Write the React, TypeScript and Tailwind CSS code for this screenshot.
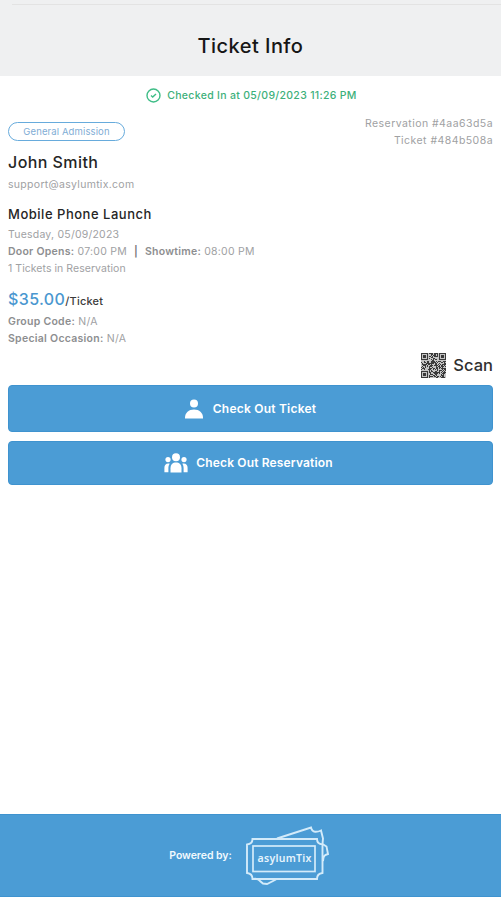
import React from "react";

const QR_SIZE = 25;

function inFinder(x: number, y: number) {
  return (x < 8 && y < 8) || (x > 16 && y < 8) || (x < 8 && y > 16);
}

function finderDark(x: number, y: number) {
  const fx = x > 16 ? x - 18 : x;
  const fy = y > 16 ? y - 18 : y;
  if (fx < 0 || fy < 0 || fx > 6 || fy > 6) return false;
  const d = Math.max(Math.abs(fx - 3), Math.abs(fy - 3));
  return d !== 2;
}

function QrCode() {
  const cells: React.ReactElement[] = [];
  let seed = 4843;
  for (let y = 0; y < QR_SIZE; y++) {
    for (let x = 0; x < QR_SIZE; x++) {
      seed = (seed * 1103515245 + 12345) % 2147483648;
      const dark = inFinder(x, y) ? finderDark(x, y) : seed / 2147483648 < 0.54;
      if (dark) cells.push(<rect key={`${x}-${y}`} x={x} y={y} width="1" height="1" />);
    }
  }
  return (
    <svg className="h-[25px] w-[25px]" viewBox="0 0 25 25" fill="#3a3a3a">
      <rect width="25" height="25" fill="#c4c4c4" />
      {cells}
    </svg>
  );
}

function PersonIcon() {
  return (
    <svg className="h-[20px] w-[18px]" viewBox="0 0 18 20" fill="#fff">
      <circle cx="9" cy="4.4" r="4" />
      <path d="M0 19.5V18.500C0 13.800 3.800 10.400 9 10.400s9 3.400 9 8.100v1z" />
    </svg>
  );
}

function GroupIcon() {
  return (
    <svg className="h-[20px] w-[24px]" viewBox="0 0 24 20" fill="#fff">
      <circle cx="12" cy="4.2" r="4" />
      <circle cx="4" cy="6.6" r="2.6" />
      <circle cx="20" cy="6.6" r="2.6" />
      <path d="M6.500 19.5v-4.200c0-3.700 2.200-5.700 5.500-5.700s5.500 2 5.500 5.700v4.200z" />
      <path d="M.4 19.2v-4.400c0-2.700 1.300-4.300 4-4.300.5 0 .9 0 1.300.2-.9 1.200-1.300 2.700-1.300 4.500v4z" />
      <path d="M23.6 19.2v-4.400c0-2.700-1.300-4.300-4-4.300-.5 0-.9 0-1.300.2.900 1.200 1.300 2.700 1.300 4.500v4z" />
    </svg>
  );
}

function TicketLogo() {
  return (
    <svg className="h-[62px] w-[86px]" viewBox="0 0 86 62" fill="none" stroke="#d3ebfa" strokeWidth="1.9">
      <path d="M32 13.500 66 2.500q1 4 4 4.300 3 .2 6-1.300l2 8-.5 5.500 4 2.500L83 29q-4 1-4.500 3.500l-.5 3.500" />
      <path d="M8 54q5-1 7 2l3 2.500 4 .5 9-4.500" />
      <path d="M7.500 14H72q0 5 5.500 5.500V48Q72 48.500 72 54H7.500Q7.500 48.500 2 48V19.500Q7.500 19 7.500 14z" />
      <rect x="8" y="21" width="62" height="25.500" strokeWidth="1.700" />
      <text x="12.500" y="37" fill="#e6f4fd" stroke="none" fontFamily="'Noto Sans', sans-serif" fontSize="10.500" fontWeight="600" textLength="54">
        asylumTix
      </text>
    </svg>
  );
}

export default function App() {
  return (
    <div className="flex h-[900px] w-[501px] flex-col overflow-hidden whitespace-nowrap bg-white font-['Inter',sans-serif] text-[10.5px] text-[#a0a1a3]">
      <header className="flex h-[76px] flex-col bg-[#eff0f1]">
        <div className="ml-3 h-[5px] border-b border-[#e3e3e3]" />
        <h1 className="mt-[27px] text-center text-[20px] leading-[28px] font-medium tracking-[0.45px] text-[#161616]">Ticket Info</h1>
      </header>

      <main className="flex flex-col px-2">
        <div className="flex h-[39px] items-center justify-center gap-[6px] pl-[2px] text-[#3db07a]">
          <svg className="h-[15px] w-[15px]" viewBox="0 0 15 15" fill="none" stroke="#3fbd87" strokeWidth="1.400">
            <circle cx="7.500" cy="7.500" r="6.500" />
            <path d="m5 7.600 1.700 1.500L10 6" />
          </svg>
          <span className="text-[10.5px] font-medium tracking-[0.31px]">Checked In at 05/09/2023 11:26 PM</span>
        </div>

        <div className="flex items-start justify-between">
          <div className="flex flex-col items-start">
            <span className="mt-[7px] flex h-[19px] w-[117px] items-center justify-center rounded-full border-[1.5px] border-[#67abdc] pt-px text-[9.5px] tracking-[0.12px] text-[#7fadd5]">General Admission</span>
            <h2 className="mt-[10px] text-[16px] leading-[22px] font-medium tracking-[0.43px] text-[#252525]">John Smith</h2>
            <p className="text-[10.5px] leading-[24px] tracking-[0.3px]">support@asylumtix.com</p>
            <h3 className="mt-[7px] text-[13px] leading-[21px] font-medium tracking-[0.52px] text-[#252525]">Mobile Phone Launch</h3>
          </div>
          <div className="text-right text-[10.5px] leading-[17px] tracking-[0.45px]">
            <p>Reservation #4aa63d5a</p>
            <p>Ticket #484b508a</p>
          </div>
        </div>

        <div className="mt-px text-[10.5px] leading-[17px]">
          <p className="tracking-[0.22px]">Tuesday, 05/09/2023</p>
          <p className="flex tracking-[0.25px]">
            <span><b className="font-semibold text-[#8d8e90]">Door Opens:</b> 07:00 PM</span>
            <b className="mx-[7px] font-semibold text-[#77787a]">|</b>
            <span><b className="font-semibold text-[#8d8e90]">Showtime:</b> 08:00 PM</span>
          </p>
          <p className="tracking-[0.05px]">1 Tickets in Reservation</p>
        </div>

        <div className="mt-3 flex h-5 items-baseline leading-5">
          <span className="text-[16px] font-medium tracking-[0.4px] text-[#4a97d0]">$35.00</span>
          <span className="text-[11px] font-medium tracking-[0.2px] text-[#3b3b3b]">/Ticket</span>
        </div>

        <div className="mt-1 text-[10.5px] leading-[17px] tracking-[0.27px]">
          <p><b className="font-semibold text-[#8d8e90]">Group Code:</b> N/A</p>
          <p><b className="font-semibold text-[#8d8e90]">Special Occasion:</b> N/A</p>
        </div>

        <div className="mt-[5px] flex h-[27px] items-center justify-end gap-[7px]">
          <QrCode />
          <span className="text-[16.5px] font-medium text-[#303030]">Scan</span>
        </div>

        <button className="mt-[6px] flex h-[47px] items-center justify-center gap-[10px] rounded-[4px] border border-[#3f93cf] bg-[#4b9cd5] text-[12px] font-semibold text-white">
          <PersonIcon />
          <span className="tracking-[0.22px]">Check Out Ticket</span>
        </button>
        <button className="mt-[9px] flex h-[44px] items-center justify-center gap-[8px] rounded-[4px] border border-[#3f93cf] bg-[#4b9cd5] pr-[4px] text-[12px] font-semibold text-white">
          <GroupIcon />
          <span className="tracking-[0.15px]">Check Out Reservation</span>
        </button>
      </main>

      <footer className="mt-auto mb-[3px] flex h-[83px] items-center justify-center gap-[13px] border-y border-[#3f93cf] bg-[#4b9cd5] pt-px pr-[1px] text-[10.5px] font-semibold text-[#f1f9fe]">
        <span className="tracking-[-0.05px]">Powered by:</span>
        <TicketLogo />
      </footer>
    </div>
  );
}
